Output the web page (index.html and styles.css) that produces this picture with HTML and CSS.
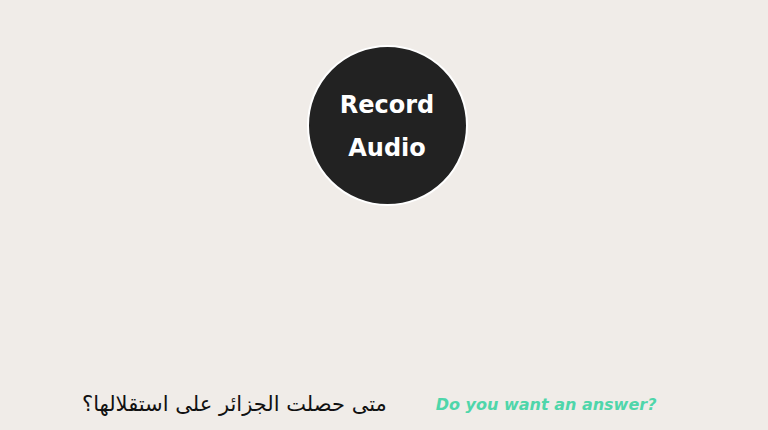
FILE: index.html
```html
<!DOCTYPE html>
<html>
<head>
<meta charset="utf-8">
<link rel="stylesheet" href="styles.css">
</head>
<body>
<div class="page">
  <div class="top">
    <button class="record">Record Audio</button>
  </div>
  <div class="bottom">
    <div class="question" dir="rtl">متى حصلت الجزائر على استقلالها؟</div>
    <div class="prompt">Do you want an answer?</div>
  </div>
</div>
</body>
</html>
```
FILE: styles.css
```css
html, body {
  margin: 0;
  padding: 0;
  background: #f0ece8;
}
.page {
  width: 768px;
  height: 430px;
  display: flex;
  flex-direction: column;
  justify-content: space-between;
  font-family: "DejaVu Sans", sans-serif;
}
.top {
  display: flex;
  justify-content: center;
  padding-top: 45px;
  padding-left: 6px;
}
.record {
  width: 161px;
  height: 161px;
  border-radius: 50%;
  background: #222222;
  border: 2px solid #ffffff;
  color: #ffffff;
  font-family: "DejaVu Sans", sans-serif;
  font-weight: bold;
  font-size: 24px;
  line-height: 43px;
  padding: 2px 16px 0;
  box-sizing: border-box;
}
.bottom {
  display: flex;
  align-items: center;
  padding: 0 0 14px 82px;
  gap: 49px;
}
.question {
  font-size: 21px;
  color: #111111;
}
.prompt {
  font-size: 16px;
  font-weight: bold;
  font-style: italic;
  color: #4fd6aa;
}
```
